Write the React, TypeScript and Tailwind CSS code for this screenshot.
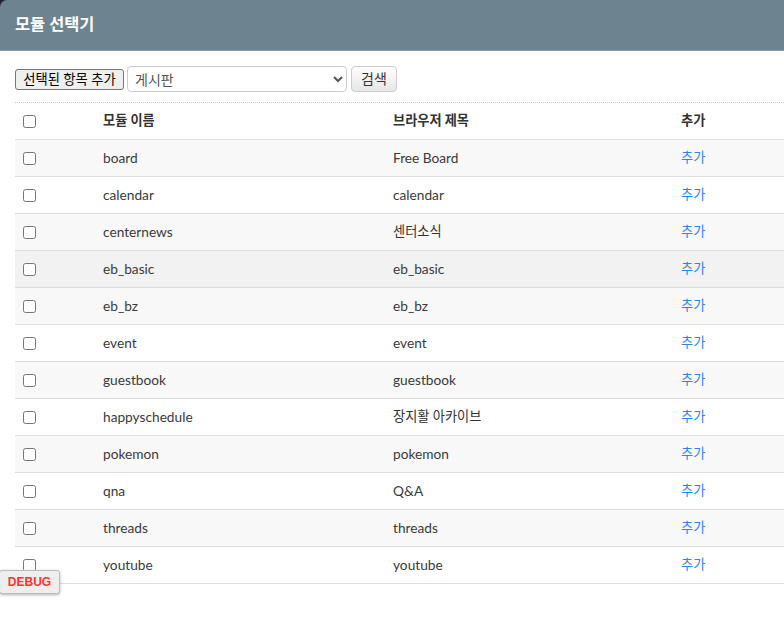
const modules = [
  ["board", "Free Board"],
  ["calendar", "calendar"],
  ["centernews", "센터소식"],
  ["eb_basic", "eb_basic"],
  ["eb_bz", "eb_bz"],
  ["event", "event"],
  ["guestbook", "guestbook"],
  ["happyschedule", "장지활 아카이브"],
  ["pokemon", "pokemon"],
  ["qna", "Q&A"],
  ["threads", "threads"],
  ["youtube", "youtube"],
];

const checkbox = "m-0 block h-[13px] w-[13px] appearance-none rounded-[2.5px] border border-[#767676] bg-white";

function rowColor(i: number) {
  // eb_basic row is in hover state in the screenshot
  if (i === 3) return "bg-[#f2f2f2]";
  return i % 2 === 0 ? "bg-[#f8f8f8]" : "bg-white";
}

// latin and hangul fall on different fonts, so they need their own size
function textCell(text: string) {
  return /^[\x00-\x7f]+$/.test(text) ? "px-2 pt-[1px] text-[13.7px] text-[#3a3a3a]" : "px-2 text-[13.2px]";
}

export default function App() {
  return (
    <div className="relative h-[618px] w-[784px] overflow-hidden bg-white font-['Lato','Noto_Sans_CJK_KR',sans-serif] text-[13.2px] text-[#333]">
      <div className="bg-[#1c2530]">
        <header className="flex h-[51px] items-center rounded-tl-[7px] border-b border-[#999] bg-[#6d8390] px-[15px] pb-[1px] text-[16.4px] font-bold text-white">
          모듈 선택기
        </header>
      </div>

      <div className="pl-[15px] pt-[15px]">
        <div className="flex h-[37px] items-start border-b border-dotted border-[#ccc]">
          <button className="mt-[3px] h-[21px] w-[109px] rounded-[3px] border border-[#767676] bg-[#efefef] text-[13.3px] leading-none text-black">
            선택된 항목 추가
          </button>
          <select className="ml-[3px] h-[26px] w-[220px] rounded-[4px] border border-[#ccc] bg-white pl-[3px] text-[14px] text-[#555]">
            <option>게시판</option>
          </select>
          <button className="ml-[4px] h-[26px] w-[46px] rounded-[4px] border border-[#ccc] bg-gradient-to-b from-white to-[#e6e6e6] pb-[1px] text-[14px] text-[#333]">
            검색
          </button>
        </div>

        <table className="w-[769px] table-fixed border-collapse">
          <colgroup>
            <col className="w-[80px]" />
            <col className="w-[290px]" />
            <col className="w-[288px]" />
            <col />
          </colgroup>
          <thead>
            <tr className="h-[36px] border-b border-[#ddd] font-bold">
              <th className="px-2 pt-[1px] text-left">
                <input type="checkbox" className={checkbox} />
              </th>
              <th className="px-2 pt-[1px] text-left">모듈 이름</th>
              <th className="px-2 pt-[1px] text-left">브라우저 제목</th>
              <th className="px-2 pt-[1px] text-left">추가</th>
            </tr>
          </thead>
          <tbody>
            {modules.map(([name, title], i) => (
              <tr key={name} className={`h-[37px] border-b border-[#ddd] ${rowColor(i)}`}>
                <td className="px-2 pt-[1px]">
                  <input type="checkbox" className={checkbox} />
                </td>
                <td className={textCell(name)}>{name}</td>
                <td className={textCell(title)}>{title}</td>
                <td className="px-2">
                  <a href="#" className="text-[#2b85f0]">추가</a>
                </td>
              </tr>
            ))}
          </tbody>
        </table>
      </div>

      <div className="absolute left-[-1px] top-[570px] flex h-[24px] w-[61px] items-center justify-center rounded-[3px] border border-[#bbb] bg-[#eee] font-['Liberation_Sans',sans-serif] text-[12px] font-bold text-[#f33] shadow-[0_1px_3px_rgba(0,0,0,0.3)]">
        DEBUG
      </div>
    </div>
  );
}
